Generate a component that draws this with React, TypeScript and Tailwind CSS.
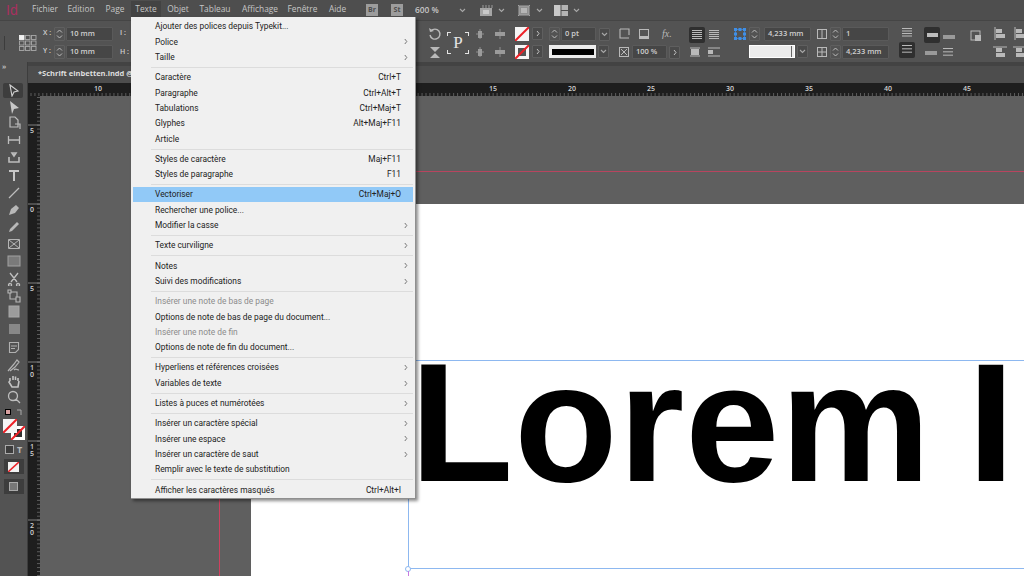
import type { ReactNode } from "react";

type MenuRow =
  | { sep: true }
  | { label: string; keys?: string; sub?: boolean; off?: boolean; hot?: boolean };

const menuRows: MenuRow[] = [
  { label: "Ajouter des polices depuis Typekit..." },
  { label: "Police", sub: true },
  { label: "Taille", sub: true },
  { sep: true },
  { label: "Caractère", keys: "Ctrl+T" },
  { label: "Paragraphe", keys: "Ctrl+Alt+T" },
  { label: "Tabulations", keys: "Ctrl+Maj+T" },
  { label: "Glyphes", keys: "Alt+Maj+F11" },
  { label: "Article" },
  { sep: true },
  { label: "Styles de caractère", keys: "Maj+F11" },
  { label: "Styles de paragraphe", keys: "F11" },
  { sep: true },
  { label: "Vectoriser", keys: "Ctrl+Maj+O", hot: true },
  { label: "Rechercher une police..." },
  { label: "Modifier la casse", sub: true },
  { sep: true },
  { label: "Texte curviligne", sub: true },
  { sep: true },
  { label: "Notes", sub: true },
  { label: "Suivi des modifications", sub: true },
  { sep: true },
  { label: "Insérer une note de bas de page", off: true },
  { label: "Options de note de bas de page du document..." },
  { label: "Insérer une note de fin", off: true },
  { label: "Options de note de fin du document..." },
  { sep: true },
  { label: "Hyperliens et références croisées", sub: true },
  { label: "Variables de texte", sub: true },
  { sep: true },
  { label: "Listes à puces et numérotées", sub: true },
  { sep: true },
  { label: "Insérer un caractère spécial", sub: true },
  { label: "Insérer une espace", sub: true },
  { label: "Insérer un caractère de saut", sub: true },
  { label: "Remplir avec le texte de substitution" },
  { sep: true },
  { label: "Afficher les caractères masqués", keys: "Ctrl+Alt+I" },
];

const topMenu: [string, string][] = [
  ["Fichier", "w-[36px]"],
  ["Edition", "w-[36px]"],
  ["Page", "w-[32px]"],
  ["Texte", "w-[30px] bg-[#434343]"],
  ["Objet", "w-[34px]"],
  ["Tableau", "w-[40px]"],
  ["Affichage", "w-[50px]"],
  ["Fenêtre", "w-[35px]"],
  ["Aide", "w-[35px]"],
];

function Ico({ w = 14, h = 14, children }: { w?: number; h?: number; children: ReactNode }) {
  return (
    <svg width={w} height={h} viewBox={`0 0 ${w} ${h}`} fill="none" className="shrink-0">
      {children}
    </svg>
  );
}

function Chevron({ className = "" }: { className?: string }) {
  return (
    <svg width="7" height="5" viewBox="0 0 7 5" fill="none" className={className}>
      <path d="M1 1l2.5 2.5L6 1" stroke="#a8a8a8" strokeWidth="1.1" />
    </svg>
  );
}

function ArrowBtn() {
  return (
    <div className="w-[11px] h-[13px] rounded-[1px] border border-[#5f5f5f] bg-[#4a4a4a] flex items-center justify-center">
      <svg width="4" height="7" viewBox="0 0 4 7" fill="none">
        <path d="M1 1l2 2.5L1 6" stroke="#c4c4c4" strokeWidth="1" />
      </svg>
    </div>
  );
}

function DropBtn() {
  return (
    <div className="w-[11px] h-[13px] rounded-[1px] border border-[#5f5f5f] bg-[#4a4a4a] flex items-center justify-center">
      <Chevron />
    </div>
  );
}

function Spinner() {
  return (
    <div className="w-[11px] h-[14px] shrink-0 rounded-[1px] border border-[#5f5f5f] flex flex-col items-center justify-center gap-[2px]">
      <svg width="7" height="4" viewBox="0 0 7 4" fill="none">
        <path d="M1 3.5L3.5 1 6 3.5" stroke="#bdbdbd" strokeWidth="1" />
      </svg>
      <svg width="7" height="4" viewBox="0 0 7 4" fill="none">
        <path d="M1 .5L3.5 3 6 .5" stroke="#bdbdbd" strokeWidth="1" />
      </svg>
    </div>
  );
}

function Field({ value, w }: { value: string; w: string }) {
  return (
    <div className={`${w} h-[14px] shrink-0 bg-[#464646] border border-[#5a5a5a] rounded-[1px] flex items-center pl-[3px] text-[7.5px] font-semibold text-[#cfcfcf]`}>
      {value}
    </div>
  );
}

function Swatch({ ring = false }: { ring?: boolean }) {
  return (
    <svg width="14" height="14" viewBox="0 0 14 14">
      <rect width="14" height="14" fill="#f5f5f5" />
      {ring && <rect x="3" y="3" width="8" height="8" fill="#555" />}
      <path d="M0 14L14 0" stroke="#ec2027" strokeWidth="2" />
    </svg>
  );
}

const g = "#b9b9b9";

function GridIcon() {
  return (
    <svg width="18" height="16" viewBox="0 0 18 16" fill="none">
      {[0, 6, 12].map((x) =>
        [0, 5.5, 11].map((y) => (
          <rect
            key={`${x}-${y}`}
            x={x + 0.5}
            y={y + 0.5}
            width="4.5"
            height="4"
            fill={x === 0 && y === 0 ? "#f2f2f2" : "none"}
            stroke={x === 0 && y === 0 ? "#f2f2f2" : "#a8a8a8"}
            strokeWidth="0.9"
          />
        )),
      )}
    </svg>
  );
}

function LineIcon({ rows = 5 }: { rows?: number }) {
  return (
    <Ico w={12} h={12}>
      {Array.from({ length: rows }).map((_, i) => (
        <rect key={i} x="1" y={1 + i * (10 / rows)} width="10" height="1" fill={g} />
      ))}
    </Ico>
  );
}

function ToggleOn({ children }: { children: ReactNode }) {
  return (
    <div className="w-[16px] h-[16px] rounded-[2px] bg-[#2f2f2f] flex items-center justify-center">
      {children}
    </div>
  );
}

function MarkIcon({ flip = false }: { flip?: boolean }) {
  return (
    <Ico w={14} h={12}>
      <path d={flip ? "M1 2h12M1 10h12" : "M2 2h10M2 10h10"} stroke={g} strokeWidth="1.2" />
      <rect x={flip ? 1 : 3} y={flip ? 4 : 3} width={flip ? 5 : 8} height={flip ? 4 : 6} fill={g} />
    </Ico>
  );
}

function Panel() {
  return (
    <div className="h-[41px] pt-[2px] bg-[#535353] flex items-center shrink-0 [&>*]:shrink-0">
      <div className="w-[1px] h-[14px] ml-[4px] bg-[#3c3c3c]" />
      <div className="ml-[14px]"><GridIcon /></div>
      <div className="ml-[6px] flex flex-col gap-[4px]">
        {["X :", "Y :"].map((axis) => (
          <div key={axis} className="flex items-center">
            <span className="w-[11px] text-[7px] font-semibold text-[#cfcfcf]">{axis}</span>
            <Spinner />
            <Field value="10 mm" w="w-[47px] ml-[1px]" />
          </div>
        ))}
      </div>
      <div className="ml-[7px] w-[10px] flex flex-col gap-[9px] text-[7px] font-semibold text-[#cfcfcf]">
        <span>I :</span>
        <span>H :</span>
      </div>
      {/* under the open menu */}
      <div className="w-[296px]" />
      <div className="flex flex-col items-center gap-[5px] w-[18px]">
        <Ico w={14} h={14}>
          <path d="M3 4a5 5 0 1 1-1 4" stroke={g} strokeWidth="1.4" />
          <path d="M1 1l1 4 4-1" fill={g} />
        </Ico>
        <Ico w={14} h={13}>
          <path d="M2 1h10L7 6zM2 12h10L7 7z" fill={g} />
        </Ico>
      </div>
      <div className="ml-[3px] w-[22px] h-[22px] relative flex items-center justify-center font-['Liberation_Serif',serif] text-[17px] text-[#e4e4e4]">
        P
        <div className="absolute left-0 top-0 w-[4px] h-[4px] border-l border-t border-[#e4e4e4]" />
        <div className="absolute right-0 top-0 w-[4px] h-[4px] border-r border-t border-[#e4e4e4]" />
        <div className="absolute left-0 bottom-0 w-[4px] h-[4px] border-l border-b border-[#e4e4e4]" />
        <div className="absolute right-0 bottom-0 w-[4px] h-[4px] border-r border-b border-[#e4e4e4]" />
      </div>
      <div className="ml-[5px] grid grid-cols-2 gap-x-[8px] gap-y-[6px]">
        {[0, 1, 2, 3].map((i) => (
          <Ico key={i} w={12} h={12}>
            <path d="M6 1v10M2 6h8" stroke="#8f8f8f" strokeWidth="1" />
            <rect x={i % 2 ? 1 : 4} y={i % 2 ? 4 : 3} width={i % 2 ? 10 : 4} height={i % 2 ? 4 : 7} fill="#9b9b9b" />
          </Ico>
        ))}
      </div>
      <div className="ml-[9px] flex flex-col gap-[4px]">
        <div className="flex items-center gap-[3px]"><Swatch /><ArrowBtn /></div>
        <div className="flex items-center gap-[3px]"><Swatch ring /><ArrowBtn /></div>
      </div>
      <div className="ml-[6px] flex flex-col gap-[4px]">
        <div className="flex items-center gap-[1px]">
          <Spinner />
          <Field value="0 pt" w="w-[35px]" />
          <div className="ml-[2px]"><DropBtn /></div>
        </div>
        <div className="flex items-center">
          <div className="w-[47px] h-[13px] bg-[#ececec] flex items-center justify-center">
            <div className="w-[42px] h-[6px] bg-black" />
          </div>
          <div className="ml-[2px]"><DropBtn /></div>
        </div>
      </div>
      <div className="ml-[8px] flex flex-col gap-[4px]">
        <div className="flex items-center gap-[8px]">
          <Ico w={12} h={12}><path d="M2 1v9h9M2 1h9v6" stroke={g} strokeWidth="1.1" /></Ico>
          <Ico w={12} h={12}><rect x="1.5" y="1.5" width="9" height="9" stroke={g} /><rect x="2" y="8" width="8" height="2" fill={g} /></Ico>
          <span className="ml-[4px] font-['Liberation_Serif',serif] italic text-[10px] text-[#b9b9b9] w-[12px]">fx.</span>
        </div>
        <div className="flex items-center gap-[2px]">
          <Ico w={12} h={12}><rect x="1.5" y="1.5" width="9" height="9" stroke={g} /><path d="M3 3l6 6M9 3l-6 6" stroke={g} /></Ico>
          <Field value="100 %" w="w-[35px]" />
          <ArrowBtn />
        </div>
      </div>
      <div className="ml-[8px] flex flex-col gap-[3px] items-center">
        <div className="flex items-center gap-[3px]">
          <ToggleOn><LineIcon /></ToggleOn>
          <LineIcon />
        </div>
        <div className="flex items-center gap-[5px]">
          <MarkIcon />
          <MarkIcon flip />
        </div>
      </div>
      <div className="ml-[13px] flex flex-col gap-[4px]">
        <div className="flex items-center gap-[3px]">
          <svg width="12" height="12" viewBox="0 0 12 12">
            {[0, 4.5, 9].map((x) =>
              [0, 4.5, 9].map((y) =>
                x === 4.5 && y === 4.5 ? null : (
                  <rect key={`${x}${y}`} x={x} y={y} width="3" height="3" fill="#3f8fe8" />
                ),
              ),
            )}
            <path d="M1.5 1.5h9v9h-9z" fill="none" stroke="#3f8fe8" strokeWidth=".7" />
          </svg>
          <Spinner />
          <Field value="4,233 mm" w="w-[47px] ml-[1px]" />
        </div>
        <div className="flex items-center ml-[15px]">
          <div className="w-[46px] h-[13px] bg-[#ececec] border border-[#fff] flex justify-end">
            <div className="w-[1px] h-full bg-[#666] mr-[2px]" />
          </div>
          <div className="ml-[2px]"><DropBtn /></div>
        </div>
      </div>
      <div className="ml-[5px] flex flex-col gap-[4px]">
        {["1", "4,233 mm"].map((v, i) => (
          <div key={v} className="flex items-center">
            <Ico w={12} h={12}>
              <rect x="1.5" y="1.5" width="9" height="9" stroke={g} />
              <path d={i ? "M6 1v10M1 6h10" : "M6 1v10"} stroke={g} />
            </Ico>
            <div className="ml-[2px]"><Spinner /></div>
            <Field value={v} w="w-[47px] ml-[1px]" />
          </div>
        ))}
      </div>
      <div className="ml-[10px] flex flex-col gap-[3px] items-center">
        <LineIcon rows={4} />
        <ToggleOn><LineIcon rows={3} /></ToggleOn>
      </div>
      <div className="ml-[9px] flex flex-col gap-[4px] items-center">
        <div className="flex items-center gap-[3px]">
          <ToggleOn><div className="w-[11px] h-[4px] bg-[#bdbdbd]" /></ToggleOn>
          <div className="w-[12px] h-[4px] bg-[#9a9a9a] mt-[5px]" />
        </div>
        <div className="flex items-center gap-[5px]">
          <div className="w-[12px] h-[4px] bg-[#9a9a9a]" />
          <LineIcon rows={3} />
        </div>
      </div>
      <div className="ml-[14px] mb-[14px]">
        <Ico w={13} h={13}>
          <rect x="2" y="2" width="9" height="9" stroke={g} />
          <rect x="6" y="6" width="6" height="6" fill={g} />
        </Ico>
      </div>
      <div className="ml-[11px] grid grid-cols-2 gap-x-[6px] gap-y-[6px]">
        {[0, 1, 2, 3].map((i) => (
          <Ico key={i} w={14} h={13}>
            <path d={i > 1 ? "M0 1h14" : "M2 0v13"} stroke={g} />
            <rect x="3" y="2" width="6" height="4" fill={g} />
            <rect x="3" y="7" width="9" height="4" fill={g} />
          </Ico>
        ))}
      </div>
    </div>
  );
}

const toolIcons: [number, ReactNode][] = [
  [17, <path d="M3 2l8 6-4 1-2 4z" stroke="#d0d0d0" strokeWidth="1.1" />],
  [17, <path d="M3 1l9 7-5 1-2 5z" fill="#c8c8c8" />],
  [16, <path d="M3 1h5l3 3v7H3zM8 8h5v5" stroke="#bdbdbd" strokeWidth="1.2" />],
  [17, <path d="M1.5 3v8M12.5 3v8M2 7h10" stroke="#bdbdbd" strokeWidth="1.3" />],
  [18, <path d="M2 7v5h10V7M5 3l2 3 2-3z" stroke="#bdbdbd" strokeWidth="1.6" />],
  [18, <path d="M2 2h10v2H8v9H6V4H2z" fill="#c8c8c8" />],
  [17, <path d="M2 12L12 2" stroke="#bdbdbd" strokeWidth="1.2" />],
  [17, <path d="M2 12l2-6 5-4 3 3-4 5z" fill="#b8b8b8" />],
  [17, <path d="M2 12l1-3 7-7 2 2-7 7z" fill="#b8b8b8" />],
  [17, <path d="M1.5 2.5h11v9h-11zM2 3l10 8M12 3L2 11" stroke="#b4b4b4" strokeWidth="1" />],
  [18, <rect x="1" y="2" width="12" height="10" fill="#7a7a7a" stroke="#a2a2a2" />],
  [17, <path d="M3 1l7 9M11 1L4 10M3 11.5a1.5 1.5 0 1 0 .1 0M11 11.5a1.5 1.5 0 1 0 .1 0" stroke="#c0c0c0" strokeWidth="1.3" />],
  [17, <path d="M1 1h3v3H1zM9 8h4v5H9zM4 3h6v5M3 4v6h6" stroke="#b8b8b8" strokeWidth="1.1" />],
  [16, <rect x="2" y="1" width="10" height="11" fill="#9c9c9c" stroke="#a8a8a8" />],
  [19, <rect x="2" y="1" width="11" height="10" fill="#888" />],
  [18, <path d="M2.5 1.5h9v7l-3 3h-6zM4 5h6M4 7.5h4" stroke="#b0b0b0" strokeWidth="1.1" />],
  [15, <path d="M1 13l6-7 3-4 2 2-4 5-5 4M7 12c2-2 3 0 5 0" stroke="#b4b4b4" strokeWidth="1.2" />],
  [17, <path d="M3 7V4M6 6V2M8.5 6V2.5M11 7V4M3 7l-1 1 3 5h6l1-6" stroke="#c4c4c4" strokeWidth="1.6" />],
  [16, <path d="M6 1.5a4.5 4.5 0 1 1 0 9 4.5 4.5 0 0 1 0-9zM9 9l4 4" stroke="#bdbdbd" strokeWidth="1.3" />],
];

function Tools() {
  return (
    <div className="w-[27px] shrink-0 bg-[#535353] flex flex-col items-center">
      <div className="w-full h-[19px] text-[7px] leading-[10px] pl-[2px] font-bold text-[#bdbdbd]">»</div>
      <div className="w-[20px] h-[15px] rounded-[2px] bg-[#3d3d3d] absolute top-[83px] left-[3px] -z-0" />
      <div className="flex flex-col items-center relative">
        {toolIcons.map(([h, icon], i) => (
          <div key={i} style={{ height: h }} className="flex items-center justify-center">
            <Ico>{icon}</Ico>
          </div>
        ))}
      </div>
      <div className="w-full flex items-center justify-center gap-[5px] h-[12px] mt-[1px]">
        <div className="w-[6px] h-[6px] bg-[#d8a0a0] border border-black" />
        <svg width="7" height="7" viewBox="0 0 7 7" fill="none"><path d="M1 1h4v5" stroke="#aaa" strokeWidth="1" /></svg>
      </div>
      <div className="relative w-[22px] h-[21px] mt-[1px]">
        <div className="absolute left-[8px] top-[7px] w-[14px] h-[14px] bg-white p-[3px]">
          <div className="w-full h-full bg-[#333]" />
        </div>
        <div className="absolute left-[8px] top-[7px]">
          <svg width="14" height="14"><path d="M0 14L14 0" stroke="#ec2027" strokeWidth="2" /></svg>
        </div>
        <div className="absolute left-0 top-0"><Swatch /></div>
      </div>
      <div className="flex items-center gap-[3px] mt-[5px]">
        <div className="w-[9px] h-[9px] bg-[#3d3d3d] border border-[#aaa]" />
        <span className="font-bold text-[9px] leading-[9px] text-[#bbb]">T</span>
      </div>
      <div className="w-[20px] h-[15px] mt-[5px] bg-[#3d3d3d] flex items-center justify-center">
        <svg width="11" height="10"><rect width="11" height="10" fill="#f2f2f2" /><path d="M0 10L11 0" stroke="#ec2027" strokeWidth="1.6" /></svg>
      </div>
      <div className="w-[20px] h-[15px] mt-[5px] bg-[#3d3d3d] flex items-center justify-center">
        <svg width="9" height="9"><rect x=".5" y=".5" width="8" height="8" fill="#777" stroke="#aaa" /></svg>
      </div>
    </div>
  );
}

function HRuler() {
  const ticks = [];
  for (let x = 3; x < 1000; x += 79 / 20) {
    const isMajor = Math.abs((x - 223 + 7900) % 79) < 0.5 || Math.abs((x - 223 + 7900) % 79) > 78.5;
    ticks.push(<path key={x} d={`M${x} ${isMajor ? 0 : 10}V13`} stroke={isMajor ? "#bdbdbd" : "#777"} strokeWidth=".7" />);
  }
  return (
    <svg width="996" height="13" className="block bg-[#1e1e1e] shrink-0">
      {ticks}
      {[
        ["10", 65],
        ["15", 460],
        ["20", 539],
        ["25", 618],
        ["30", 697],
        ["35", 776],
        ["40", 855],
        ["45", 934],
      ].map(([t, x]) => (
        <text key={t} x={Number(x) + 1} y="8" fontSize="7" fontWeight="600" fill="#d2d2d2" fontFamily="Open Sans, sans-serif">
          {t}
        </text>
      ))}
    </svg>
  );
}

function VRuler() {
  const ticks = [];
  for (let y = 0; y < 480; y += 79 / 20) {
    ticks.push(<path key={y} d={`M9 ${y + 1.5}H12`} stroke="#777" strokeWidth=".7" />);
  }
  return (
    <svg width="12" height="480" className="block bg-[#1e1e1e] shrink-0">
      {ticks}
      {[
        ["5", 29],
        ["0", 108],
        ["5", 187],
        ["1", 266],
        ["1", 345],
        ["2", 424],
      ].map(([t, y], i) => (
        <g key={i} fontSize="7" fontWeight="600" fill="#d2d2d2" fontFamily="Open Sans, sans-serif">
          <path d={`M0 ${Number(y)}H12`} stroke="#aaa" strokeWidth=".7" />
          <text x="2" y={Number(y) + 8}>{t}</text>
          {i > 2 && <text x="2" y={Number(y) + 15}>{i === 3 ? "0" : i === 4 ? "5" : "0"}</text>}
        </g>
      ))}
    </svg>
  );
}

function TextMenu() {
  return (
    <div className="absolute left-[131px] top-[17px] w-[285px] h-[482px] pt-[2px] bg-[#f0f0f0] border-r border-b border-[#8f8f8f] shadow-[2px_2px_3px_rgba(0,0,0,0.45)] font-['Roboto',sans-serif] text-[8.4px] text-[#222]">
      {menuRows.map((row, i) =>
        "sep" in row ? (
          <div key={i} className="h-[4.95px] pl-[20px] pr-[2px] flex items-center">
            <div className="w-full h-[1px] bg-[#dcdcdc]" />
          </div>
        ) : (
          <div
            key={i}
            className={`h-[15.33px] mx-[2px] pl-[22px] flex items-center ${row.hot ? "bg-[#91c9f7]" : ""} ${row.off ? "text-[#8c8c8c]" : ""}`}
          >
            <span className="flex-1 whitespace-nowrap">{row.label}</span>
            {row.keys && <span className="mr-[12px]">{row.keys}</span>}
            {row.sub && (
              <svg width="4" height="7" viewBox="0 0 4 7" fill="none" className="mr-[5px]">
                <path d="M.8 1l2 2.5-2 2.5" stroke="#666" strokeWidth=".9" />
              </svg>
            )}
          </div>
        ),
      )}
    </div>
  );
}

export default function App() {
  return (
    <div className="relative w-[1024px] h-[576px] overflow-hidden flex flex-col bg-[#535353] font-['Open_Sans',sans-serif]">
      <div className="h-[21px] shrink-0 bg-[#4e4e4e] flex items-center border-b border-[#454545]">
        <span className="w-[27px] pl-[6px] text-[14px] font-['Liberation_Sans',sans-serif] text-[#a8305f]">Id</span>
        {topMenu.map(([label, cls]) => (
          <div key={label} className={`${cls} h-[17px] mb-[1px] flex items-center justify-center text-[8.4px] text-[#c6c6c6]`}>
            {label}
          </div>
        ))}
        <div className="ml-[11px] w-[12px] h-[12px] bg-[#9c9c9c] text-[7px] font-bold text-[#4e4e4e] flex items-center justify-center">Br</div>
        <div className="ml-[13px] w-[12px] h-[12px] bg-[#9c9c9c] text-[7px] font-bold text-[#4e4e4e] flex items-center justify-center">St</div>
        <span className="ml-[12px] text-[8.4px] font-semibold text-[#c6c6c6] whitespace-nowrap">600 %</span>
        <Chevron className="ml-[20px]" />
        <div className="ml-[13px]">
          <Ico w={14} h={13}>
            <path d="M4 1v3M7 1v3M10 1v3M13 1v3" stroke="#a5a5a5" strokeWidth=".9" />
            <rect x="1" y="4" width="12" height="8" fill="#a5a5a5" />
            <rect x="4" y="6" width="6" height="4" fill="#c9c9c9" />
          </Ico>
        </div>
        <Chevron className="ml-[5px]" />
        <div className="ml-[12px]">
          <Ico w={14} h={13}>
            <path d="M1 1l3 3M13 1l-3 3M1 12l3-3M13 12l-3-3" stroke="#a5a5a5" />
            <rect x="2" y="2" width="10" height="9" fill="#8f8f8f" stroke="#a5a5a5" />
            <rect x="4" y="4" width="6" height="5" fill="#b5b5b5" />
          </Ico>
        </div>
        <Chevron className="ml-[5px]" />
        <div className="ml-[11px]">
          <Ico w={14} h={11}>
            <rect x="0" y="0" width="6.5" height="11" fill="#c9c9c9" />
            <rect x="7.5" y="0" width="6.5" height="5" fill="#b5b5b5" />
            <rect x="7.5" y="6" width="6.5" height="5" fill="#b5b5b5" />
          </Ico>
        </div>
        <Chevron className="ml-[5px]" />
      </div>
      <Panel />
      <div className="flex-1 flex min-h-0">
        <Tools />
        <div className="flex-1 flex flex-col min-w-0 border-l border-[#3d3d3d]">
          <div className="h-[21px] shrink-0 bg-[#434343] flex items-end">
            <div className="w-full h-[17px] pb-[2px] bg-[#4d4d4d] pl-[10px] flex items-center text-[7.5px] font-bold text-[#dedede]">
              *Schrift einbetten.indd @
            </div>
          </div>
          <HRuler />
          <div className="flex-1 flex min-h-0">
            <VRuler />
            <div className="relative flex-1 bg-[#5f5f5f] overflow-hidden">
              <div className="absolute left-[179px] top-0 bottom-0 w-[1px] bg-[#d0405f]" />
              <div className="absolute left-[179px] right-0 top-[75px] h-[1px] bg-[#b8455f]" />
              <div className="absolute left-[211px] right-0 top-[108px] bottom-0 bg-white" />
              <div className="absolute left-[368px] right-[-20px] top-[264px] h-[209px] border border-[#8db8f0]">
                <div className="absolute left-[-4px] bottom-[-4px] w-[6px] h-[6px] rounded-full bg-white border border-[#8db8f0]" />
                <div className="absolute left-[-1px] top-[210px] w-[1px] h-[8px] bg-[#c77be0]" />
              </div>
              <div className="absolute left-[370px] top-[242px] font-['Liberation_Sans',sans-serif] font-bold text-[169px] leading-[169px] tracking-[1px] text-black whitespace-nowrap [word-spacing:-12px]">
                Lorem I
              </div>
            </div>
          </div>
        </div>
      </div>
      <TextMenu />
    </div>
  );
}
